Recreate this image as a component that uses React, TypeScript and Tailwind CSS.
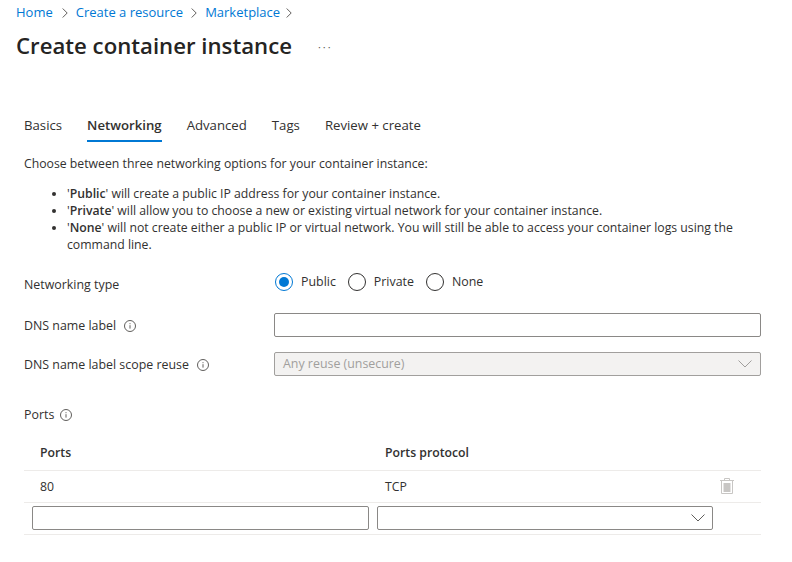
const TABS = ['Basics', 'Networking', 'Advanced', 'Tags', 'Review + create'];

const Crumb = () => (
  <svg width="6" height="10" viewBox="0 0 6 10" fill="none" stroke="#605e5c" strokeWidth="1" className="shrink-0">
    <path d="M0.700 0.500 5.200 5 0.700 9.500" />
  </svg>
);

const Caret = ({ color }: { color: string }) => (
  <svg width="14" height="8" viewBox="0 0 14 8" fill="none" stroke={color} strokeWidth="1" className="shrink-0">
    <path d="M0.500 0.500 7 7 13.500 0.500" />
  </svg>
);

const InfoIcon = () => (
  <svg width="12" height="12" viewBox="0 0 12 12" fill="none" stroke="#605e5c" strokeWidth="1" className="shrink-0">
    <circle cx="6" cy="6" r="5.500" />
    <path d="M6 5.200v3.400M6 3.200v1" />
  </svg>
);

const Radio = ({ label, checked, className }: { label: string; checked?: boolean; className: string }) => (
  <div className={`flex items-center ${className}`}>
    <div className={`flex h-[18px] w-[18px] items-center justify-center rounded-full border ${checked ? 'border-[#0078d4]' : 'border-[#323130]'}`}>
      {checked && <div className="h-[10px] w-[10px] rounded-full bg-[#0078d4]" />}
    </div>
    <span className="ml-2 text-[#323130]">{label}</span>
  </div>
);

const TrashIcon = () => (
  <svg width="14" height="16" viewBox="0 0 14 16" fill="none" stroke="#c8c6c4">
    <path d="M0 2.500h14M4.500 2V.500h5V2" />
    <path d="M1.500 3v12.500h11V3" />
    <path d="M3.500 5h7v9h-7z" fill="#c8c6c4" stroke="none" />
  </svg>
);

export default function App() {
  return (
    <div className="h-[562px] w-[792px] overflow-hidden bg-white pl-4 font-['Open_Sans','Noto_Sans',sans-serif] text-[12.4px] text-[#323130]">
      <nav className="flex h-[25px] items-center text-[13px] text-[#0078d4]">
        <span>Home</span>
        <span className="ml-[9px] mr-[8px] flex"><Crumb /></span>
        <span>Create a resource</span>
        <span className="mx-[8px] flex"><Crumb /></span>
        <span>Marketplace</span>
        <span className="ml-[6px] flex"><Crumb /></span>
      </nav>

      <div className="mt-[3px] flex h-[36px] items-center">
        <h1 className="text-[22.2px] font-semibold text-[#252423]">Create container instance</h1>
        <span className="ml-[26px] text-[11px] leading-none tracking-[2px] text-[#605e5c]">···</span>
      </div>

      <div className="ml-2 mt-[47px] flex h-[31px] gap-[25px] text-[13.2px]">
        {TABS.map((tab) => (
          <div
            key={tab}
            className={`flex items-center border-b-2 pb-[3px] pt-[3px] ${tab === 'Networking' ? 'border-[#0078d4] font-semibold' : 'border-transparent'}`}
          >
            {tab}
          </div>
        ))}
      </div>

      <div className="ml-2 w-[737px]">
        <p className="mt-[13px] text-[12.25px] leading-[18px]">Choose between three networking options for your container instance:</p>
        <ul className="ml-[43px] mt-[12px] list-disc text-[12.25px] leading-[17px]">
          <li>'<b className="font-semibold">Public</b>' will create a public IP address for your container instance.</li>
          <li>'<b className="font-semibold">Private</b>' will allow you to choose a new or existing virtual network for your container instance.</li>
          <li>'<b className="font-semibold">None</b>' will not create either a public IP or virtual network. You will still be able to access your container logs using the command line.</li>
        </ul>

        <div className="mt-[13px] grid grid-cols-[250px_1fr] items-center">
          <div className="pt-[6px]">Networking type</div>
          <div className="flex h-[32px] items-center pl-px">
            <Radio label="Public" checked className="" />
            <Radio label="Private" className="ml-[12px]" />
            <Radio label="None" className="ml-[12px]" />
          </div>

          <div className="mt-[15px] flex items-center gap-[8px] pt-[2px]">DNS name label <InfoIcon /></div>
          <div className="mt-[15px] h-[24px] rounded-[2px] border border-[#8a8886]" />

          <div className="mt-[15px] flex items-center gap-[8px] pt-[2px]">DNS name label scope reuse <InfoIcon /></div>
          <div className="mt-[15px] flex h-[24px] items-center justify-between rounded-[2px] border border-[#a19f9d] bg-[#f3f2f1] pl-2 pr-[8px] text-[#a19f9d]">
            <span>Any reuse (unsecure)</span>
            <Caret color="#a19f9d" />
          </div>
        </div>

        <div className="mt-[30px] flex items-center gap-[6px]">Ports <InfoIcon /></div>

        <div className="mt-[13px] text-[12.25px]">
          <div className="grid h-[33px] grid-cols-[345px_1fr] items-center border-b border-[#edebe9] pl-4 font-semibold">
            <div>Ports</div>
            <div>Ports protocol</div>
          </div>
          <div className="flex h-[32px] items-center border-b border-[#edebe9] pl-4">
            <div className="w-[345px] pt-[2px]">80</div>
            <div className="pt-[2px]">TCP</div>
            <div className="ml-auto mr-[27px] flex"><TrashIcon /></div>
          </div>
          <div className="flex h-[32px] items-center gap-2 border-b border-[#edebe9] pl-2">
            <div className="h-[24px] w-[337px] rounded-[2px] border border-[#8a8886]" />
            <div className="flex h-[24px] w-[336px] items-center justify-end rounded-[2px] border border-[#8a8886] pr-[7px]">
              <Caret color="#605e5c" />
            </div>
          </div>
        </div>
      </div>
    </div>
  );
}
